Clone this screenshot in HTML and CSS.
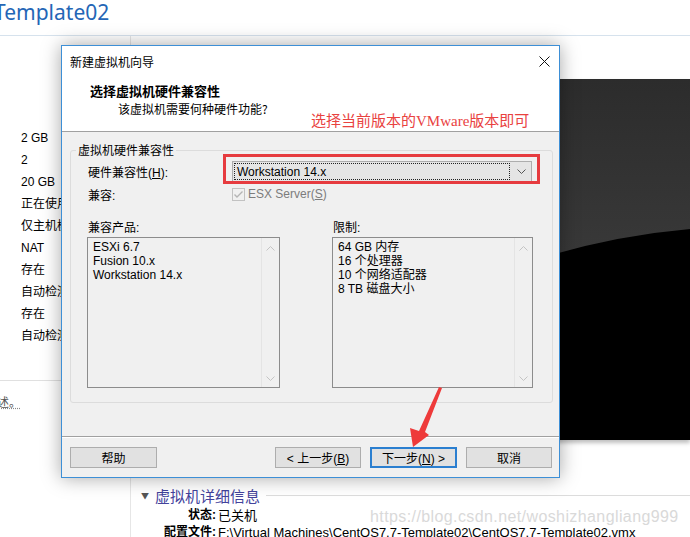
FILE: index.html
```html
<!DOCTYPE html>
<html lang="zh-CN">
<head>
    <meta charset="UTF-8">
    <meta name="viewport" content="width=device-width, initial-scale=1.0">
    <title>新建虚拟机向导</title>
    <link rel="stylesheet" href="styles.css">
</head>
<body>
    <div class="app">
        <header class="app-title"><span>Template02</span></header>

        <div class="app-body">
            <aside class="side">
                <ul class="hw-values">
                    <li>2 GB</li>
                    <li>2</li>
                    <li>20 GB</li>
                    <li>正在使用</li>
                    <li>仅主机模式</li>
                    <li>NAT</li>
                    <li>存在</li>
                    <li>自动检测</li>
                    <li>存在</li>
                    <li>自动检测</li>
                </ul>
                <div class="side-desc"><span>述。</span></div>
            </aside>

            <main class="vm">
                <div class="preview">
                    <svg width="540" height="361" viewBox="0 0 540 361">
                        <defs>
                            <linearGradient id="shine" x1="0" y1="0" x2="0" y2="1">
                                <stop offset="0" stop-color="#2c2c2c"/>
                                <stop offset="1" stop-color="#414141"/>
                            </linearGradient>
                        </defs>
                        <rect width="540" height="361" fill="#000"/>
                        <path d="M0 0 H540 V150 Q470 156 400 176 L0 300 Z" fill="url(#shine)"/>
                    </svg>
                </div>

                <section class="details">
                    <h2 class="details-head"><span class="tri">▼</span>虚拟机详细信息</h2>
                    <div class="details-row">
                        <b>状态:</b>
                        <span>已关机</span>
                    </div>
                    <div class="details-row">
                        <b>配置文件:</b>
                        <span>F:\Virtual Machines\CentOS7.7-Template02\CentOS7.7-Template02.vmx</span>
                    </div>
                </section>
            </main>
        </div>
    </div>

    <!-- 向导窗口 -->
    <div class="dialog">
        <div class="dlg-titlebar">
            <span>新建虚拟机向导</span>
            <svg class="dlg-close" width="11" height="11" viewBox="0 0 11 11">
                <path d="M0.5 0.5 L10.5 10.5 M10.5 0.5 L0.5 10.5" stroke="#111" stroke-width="1"/>
            </svg>
        </div>

        <div class="dlg-header">
            <div class="dlg-heading">选择虚拟机硬件兼容性</div>
            <div class="dlg-sub">该虚拟机需要何种硬件功能?</div>
        </div>

        <div class="dlg-body">
            <fieldset class="group">
                <legend>虚拟机硬件兼容性</legend>

                <div class="form-row">
                    <label class="row-label">硬件兼容性(<u>H</u>):</label>
                    <div class="combo">
                        <span class="combo-value">Workstation 14.x</span>
                        <svg class="combo-arrow" width="9" height="5" viewBox="0 0 9 5">
                            <path d="M0.5 0.5 L4.5 4.5 L8.5 0.5" fill="none" stroke="#555" stroke-width="1"/>
                        </svg>
                    </div>
                </div>

                <div class="form-row row-check">
                    <label class="row-label">兼容:</label>
                    <span class="check">
                        <svg width="13" height="13" viewBox="0 0 13 13">
                            <rect x="0.5" y="0.5" width="12" height="12" fill="#f0f0f0" stroke="#c2c2c2"/>
                            <path d="M2.5 6.5 L5 9 L10.5 3.5" fill="none" stroke="#b4b4b4" stroke-width="1.4"/>
                        </svg>
                        <span>ESX Server(<u>S</u>)</span>
                    </span>
                </div>

                <div class="lists">
                    <div class="list-col">
                        <div class="list-label">兼容产品:</div>
                        <div class="listbox">
                            <ul>
                                <li>ESXi 6.7</li>
                                <li>Fusion 10.x</li>
                                <li>Workstation 14.x</li>
                            </ul>
                            <div class="scroll">
                                <svg width="9" height="5" viewBox="0 0 9 5"><path d="M0.5 4.5 L4.5 0.5 L8.5 4.5" fill="none" stroke="#c4c4c4"/></svg>
                                <svg width="9" height="5" viewBox="0 0 9 5"><path d="M0.5 0.5 L4.5 4.5 L8.5 0.5" fill="none" stroke="#c4c4c4"/></svg>
                            </div>
                        </div>
                    </div>
                    <div class="list-col">
                        <div class="list-label">限制:</div>
                        <div class="listbox">
                            <ul>
                                <li>64 GB 内存</li>
                                <li>16 个处理器</li>
                                <li>10 个网络适配器</li>
                                <li>8 TB 磁盘大小</li>
                            </ul>
                            <div class="scroll">
                                <svg width="9" height="5" viewBox="0 0 9 5"><path d="M0.5 4.5 L4.5 0.5 L8.5 4.5" fill="none" stroke="#c4c4c4"/></svg>
                                <svg width="9" height="5" viewBox="0 0 9 5"><path d="M0.5 0.5 L4.5 4.5 L8.5 0.5" fill="none" stroke="#c4c4c4"/></svg>
                            </div>
                        </div>
                    </div>
                </div>
            </fieldset>
        </div>

        <div class="dlg-footer">
            <button class="btn btn-help">帮助</button>
            <div class="nav-buttons">
                <button class="btn btn-back">&lt; 上一步(<u>B</u>)</button>
                <button class="btn btn-next">下一步(<u>N</u>) &gt;</button>
                <button class="btn">取消</button>
            </div>
        </div>
    </div>

    <!-- 红色标注 -->
    <div class="note-box"></div>
    <div class="note">选择当前版本的VMware版本即可</div>
    <svg class="note-arrow" width="690" height="537" viewBox="0 0 690 537">
        <polygon points="439,387 442,388 425,432 429,435 413,447 410,428 419,431" fill="#ee3a3a"/>
    </svg>

    <div class="watermark">https://blog.csdn.net/woshizhangliang999</div>
</body>
</html>
```

FILE: styles.css
```css
body {
    margin: 0;
    width: 690px;
    height: 537px;
    overflow: hidden;
    position: relative;
    background: #fff;
    font-family: "Liberation Sans", "Noto Sans CJK SC", sans-serif;
    font-size: 12px;
    color: #000;
}

ul {
    list-style: none;
    margin: 0;
    padding: 0;
}

/* 背景里的 VMware 主窗口 */
.app-title {
    height: 35px;
    border-bottom: 1px solid #d6e2ed;
    font-family: "Noto Sans", "Noto Sans CJK SC", sans-serif;
    font-size: 21px;
    line-height: 24px;
    color: #2466b6;
    overflow: hidden;
}

.app-title span {
    display: block;
    margin-left: -6px;
}

.app-body {
    display: flex;
    height: 501px;
}

.side {
    width: 130px;
    border-right: 1px solid #e6e6e6;
    flex-shrink: 0;
}

.hw-values {
    padding: 91px 0 0 21px;
    white-space: nowrap;
}

.hw-values li {
    height: 22px;
    line-height: 22px;
}

.side-desc {
    margin-top: 33px;
    border-top: 1px solid #e0e0e0;
    padding-top: 12px;
    color: #555;
    overflow: hidden;
}

.side-desc span {
    display: block;
    margin-left: -3px;
    text-decoration: underline dotted #888;
}

.vm {
    flex: 1;
    overflow: hidden;
}

.preview {
    margin: 43px 0 0 20px;
    height: 361px;
    box-shadow: 0 3px 4px rgba(0, 0, 0, 0.25);
}

.preview svg {
    display: block;
}

.details {
    margin-top: 45px;
}

.details-head {
    display: flex;
    align-items: center;
    margin: 0 0 2px;
    padding-left: 10px;
    height: 20px;
    font-size: 15px;
    font-weight: normal;
    color: #43439c;
    font-family: "Noto Sans CJK SC", sans-serif;
}

.details-head::after {
    content: "";
    flex: 1;
    border-top: 1px solid #dcdcdc;
    margin-left: 6px;
}

.tri {
    font-size: 8px;
    color: #555;
    margin-right: 6px;
}

.details-row {
    display: grid;
    grid-template-columns: 85px 1fr;
    column-gap: 2px;
    height: 17px;
    line-height: 17px;
    font-size: 13px;
    white-space: nowrap;
}

.details-row b {
    text-align: right;
    font-size: 12px;
}

/* 向导对话框 */
.dialog {
    position: absolute;
    left: 61px;
    top: 45px;
    width: 497px;
    height: 431px;
    border: 1px solid #3d8fd6;
    background: #f0f0f0;
    box-shadow: 0 0 18px rgba(0, 0, 0, 0.35);
    display: flex;
    flex-direction: column;
}

.dlg-titlebar {
    height: 30px;
    background: #fff;
    display: flex;
    align-items: center;
    justify-content: space-between;
    padding: 0 9px 0 8px;
    font-family: "Noto Sans CJK SC", sans-serif;
}

.dlg-close {
    display: block;
    margin-top: 1px;
}

.dlg-header {
    height: 55px;
    background: #fff;
    border-bottom: 1px solid #a0a0a0;
    padding-left: 28px;
    font-family: "Noto Sans CJK SC", sans-serif;
    box-sizing: content-box;
}

.dlg-heading {
    margin-top: 6px;
    font-weight: bold;
    font-size: 13px;
    line-height: 18px;
}

.dlg-sub {
    padding-left: 28px;
    line-height: 18px;
}

.dlg-body {
    height: 305px;
    padding: 10px 7px 0 8px;
    box-sizing: border-box;
    border-bottom: 1px solid #a0a0a0;
}

.group {
    margin: 0;
    padding: 0 19px 14px 16px;
    border: 1px solid #dcdcdc;
    border-radius: 3px;
}

.group legend {
    padding: 0 2px;
    margin-left: -11px;
    line-height: 16px;
    font-family: "Noto Sans CJK SC", sans-serif;
}

.form-row {
    display: flex;
    align-items: center;
}

.form-row:first-of-type {
    margin-top: 2px;
    height: 22px;
}

.row-check {
    height: 24px;
}

.row-label {
    width: 144px;
    padding-left: 1px;
    flex-shrink: 0;
}

.combo {
    width: 300px;
    height: 21px;
    box-sizing: border-box;
    border: 1px solid #adadad;
    background: #e5e5e5;
    display: flex;
    align-items: center;
    padding: 1px;
}

.combo-value {
    flex: 1;
    height: 17px;
    line-height: 16px;
    border: 1px dotted #222;
    box-sizing: border-box;
    padding-left: 2px;
    margin-right: 7px;
}

.combo-arrow {
    margin-right: 4px;
}

.check {
    display: flex;
    align-items: center;
    gap: 3px;
    color: #7c7c7c;
}

.lists {
    display: grid;
    grid-template-columns: 193px 201px;
    column-gap: 52px;
    margin-top: 14px;
}

.list-label {
    line-height: 16px;
    padding-left: 1px;
    margin-bottom: 1px;
}

.listbox {
    height: 151px;
    border: 1px solid #8c8c8c;
    box-sizing: border-box;
    display: flex;
}

.listbox ul {
    flex: 1;
    padding: 2px 0 0 5px;
}

.listbox li {
    line-height: 14px;
    white-space: nowrap;
}

.scroll {
    width: 17px;
    border-left: 1px solid #e4e4e4;
    display: flex;
    flex-direction: column;
    justify-content: space-between;
    align-items: center;
    padding: 8px 0 6px;
}

.scroll svg {
    display: block;
}

.dlg-footer {
    flex: 1;
    border-top: 1px solid #fff;
    display: flex;
    justify-content: space-between;
    align-items: flex-start;
    padding: 9px 7px 0 8px;
}

.nav-buttons {
    display: flex;
    gap: 9px;
}

.btn {
    width: 86px;
    height: 21px;
    padding: 0;
    border: 1px solid #adadad;
    background: #e1e1e1;
    font-family: "Liberation Sans", "Noto Sans CJK SC", sans-serif;
    font-size: 12px;
    color: #000;
}

.btn-help {
    width: 87px;
}

.btn-next {
    width: 87px;
    border: 2px solid #2b7fd0;
}

/* 红色标注 */
.note-box {
    position: absolute;
    left: 223px;
    top: 154px;
    width: 311px;
    height: 24px;
    border: 3px solid #e63b3f;
}

.note {
    position: absolute;
    left: 311px;
    top: 111px;
    font-family: "Liberation Serif", "Noto Sans CJK SC", serif;
    font-size: 15px;
    line-height: 20px;
    color: #e9423f;
    white-space: nowrap;
}

.note-arrow {
    position: absolute;
    left: 0;
    top: 0;
    pointer-events: none;
}

.watermark {
    position: absolute;
    left: 370px;
    top: 509px;
    font-size: 16px;
    line-height: 15px;
    letter-spacing: 0.4px;
    color: #d9d9d9;
    white-space: nowrap;
}
```
